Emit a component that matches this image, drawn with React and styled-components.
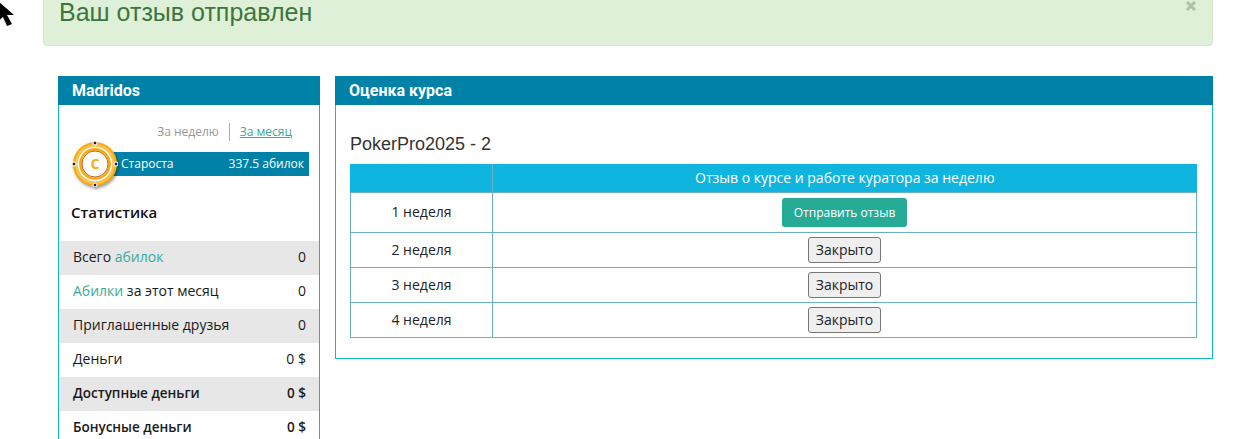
import React from "react";
import styled, { createGlobalStyle } from "styled-components";

const GlobalStyle = createGlobalStyle`
  html, body {
    margin: 0;
    padding: 0;
    height: 439px;
    overflow: hidden;
    background: #fff;
    font-family: "Open Sans", "Liberation Sans", sans-serif;
    color: #222;
  }
  * { box-sizing: border-box; }
`;

const Page = styled.div`
  position: relative;
  width: 1247px;
  height: 439px;
  overflow: hidden;
  padding: 0 34px 0 43px;
`;

const Cursor = styled.svg`
  position: absolute;
  left: 0;
  top: 0;
`;

const Alert = styled.div`
  position: relative;
  height: 46px;
  background: #dff0d8;
  border: 1px solid #d6e9c6;
  border-top: 0;
  border-radius: 0 0 4px 4px;
  padding-left: 15px;
  color: #3c763d;
  font-family: "Liberation Sans", Arial, sans-serif;
  font-size: 25px;
  line-height: 25.5px;
`;

const Close = styled.svg`
  position: absolute;
  right: 16px;
  top: 1px;
  opacity: 0.2;
`;

const Columns = styled.div`
  display: flex;
  align-items: flex-start;
  gap: 15px;
  margin: 30px 0 0 15px;
`;

const Panel = styled.section`
  border: 1px solid #10b5df;
  border-top: 0;
  background: #fff;
  width: ${(p) => p.$width}px;
`;

const PanelHead = styled.h3`
  margin: 0 -1px;
  height: 29px;
  background: #0082a8;
  color: #fff;
  padding-left: 14px;
  font-family: Roboto, "Open Sans", sans-serif;
  font-size: 16px;
  font-weight: 700;
  line-height: 30px;
`;

const Tabs = styled.div`
  display: flex;
  justify-content: flex-end;
  align-items: center;
  height: 18px;
  margin-top: 18px;
  padding-right: 27px;
  font-size: 12px;
`;

const TabPlain = styled.span`
  color: #999;
  padding-right: 10px;
  border-right: 1px solid #aaa;
  line-height: 18px;
`;

const TabLink = styled.a`
  color: #3aa99a;
  text-decoration: underline;
  padding-left: 10px;
  line-height: 18px;
`;

const RankRow = styled.div`
  position: relative;
  margin: 11px 10px 0 35px;
  height: 24px;
  background: #0082a8;
  color: #fff;
  font-size: 12px;
  line-height: 24px;
  display: flex;
  justify-content: space-between;
  padding: 0 5px 0 27px;
`;

const Chip = styled.svg`
  position: absolute;
  left: -22px;
  top: -11.5px;
  filter: drop-shadow(1px 2px 1.5px rgba(0, 0, 0, 0.4));
`;

const StatsTitle = styled.h4`
  margin: 26px 0 0 12px;
  height: 39px;
  font-size: 15px;
  font-weight: 600;
  line-height: 20px;
  color: #111;
`;

const StatRow = styled.div`
  display: flex;
  justify-content: space-between;
  height: 34px;
  padding: 0 13px 0 14px;
  font-size: ${(p) => (p.$bold ? 13.5 : 14)}px;
  line-height: 32px;
  font-weight: ${(p) => (p.$bold ? 600 : 400)};
  color: #1a1a1a;
  background: ${(p) => (p.$shaded ? "#e7e7e7" : "#fff")};
`;

const Accent = styled.span`
  color: #3aa99a;
`;

const MainBody = styled.div`
  padding: 28px 15px 20px 14px;
`;

const CourseTitle = styled.h3`
  margin: 0 0 9px;
  font-family: "Liberation Sans", Arial, sans-serif;
  font-size: 18px;
  font-weight: 400;
  line-height: 22px;
  color: #333;
`;

const Table = styled.table`
  width: 847px;
  border-collapse: collapse;
  table-layout: fixed;
  font-size: 14px;
`;

const HeadCell = styled.th`
  height: 28px;
  padding: 0;
  background: #10b5df;
  color: #fff;
  font-size: 14px;
  font-weight: 400;
  border: 1px solid #6aafc4;
  border-top: 0;
  border-right: 0;
  border-left-color: ${(p) => (p.$first ? "#10b5df" : "#6aafc4")};
  width: ${(p) => p.$width || "auto"};
`;

const Cell = styled.td`
  padding: 0 0 ${(p) => (p.$lift ? 2 : 0)}px;
  height: ${(p) => p.$height}px;
  text-align: center;
  border: 1px solid #6aafc4;
`;

const SendButton = styled.a`
  display: inline-block;
  height: 29px;
  line-height: 29px;
  padding: 0 12px;
  background: #26ab97;
  color: #fff;
  border-radius: 3px;
  font-size: 12px;
  vertical-align: middle;
`;

const ClosedButton = styled.button`
  height: 26px;
  width: 73px;
  padding: 0;
  background: #efefef;
  border: 1px solid #767676;
  border-radius: 3px;
  color: #222;
  font-family: "Open Sans", sans-serif;
  font-size: 14px;
  vertical-align: middle;
`;

const stats = [
  { id: "total", value: "0", label: <>Всего <Accent>абилок</Accent></> },
  { id: "month", value: "0", label: <><Accent>Абилки</Accent> за этот месяц</> },
  { id: "friends", value: "0", label: "Приглашенные друзья" },
  { id: "money", value: "0 $", label: "Деньги" },
  { id: "free", value: "0 $", label: "Доступные деньги", bold: true },
  { id: "bonus", value: "0 $", label: "Бонусные деньги", bold: true },
];

function PokerChip() {
  return (
    <Chip width="46" height="46" viewBox="0 0 46 46">
      <circle cx="23" cy="23" r="22" fill="#fba90f" />
      <circle cx="23" cy="23" r="18.5" fill="none" stroke="#fcc24f" strokeWidth="3" />
      <circle cx="23" cy="23" r="16.5" fill="none" stroke="#fff" strokeWidth="1.6" />
      <circle cx="23" cy="23" r="14.5" fill="#fff" stroke="#fba90f" strokeWidth="2.4" />
      <circle cx="23" cy="23" r="13" fill="#fff" stroke="#b8672a" strokeWidth="1" />
      <text x="23" y="28" textAnchor="middle" fontFamily="Open Sans, sans-serif" fontSize="14" fontWeight="700" fill="#fba90f">C</text>
      <circle cx="23" cy="2" r="2.5" fill="#fff" />
      <circle cx="23" cy="44" r="2.5" fill="#fff" />
      <circle cx="2" cy="23" r="2.5" fill="#fff" />
      <circle cx="44" cy="23" r="2.5" fill="#fff" />
      <rect x="21.75" y="0.75" width="2.5" height="2.5" fill="#222" />
      <rect x="21.75" y="42.75" width="2.5" height="2.5" fill="#222" />
      <rect x="0.75" y="21.75" width="2.5" height="2.5" fill="#222" />
      <rect x="42.75" y="21.75" width="2.5" height="2.5" fill="#222" />
    </Chip>
  );
}

export default function App() {
  return (
    <Page>
      <GlobalStyle />
      <Cursor width="14" height="26" viewBox="0 0 14 26">
        <path d="M-3 0 L14 15 L7 15 L12 24 L7 26 L3 17 L-3 22 Z" fill="#000" />
      </Cursor>
      <Alert>
        Ваш отзыв отправлен
        <Close width="10" height="10" viewBox="0 0 10 10">
          <path d="M1 1 L9 9 M9 1 L1 9" stroke="#000" strokeWidth="3" fill="none" />
        </Close>
      </Alert>
      <Columns>
        <Panel $width={262}>
          <PanelHead>Madridos</PanelHead>
          <Tabs>
            <TabPlain>За неделю</TabPlain>
            <TabLink>За месяц</TabLink>
          </Tabs>
          <RankRow>
            <PokerChip />
            <span>Староста</span>
            <span>337.5 абилок</span>
          </RankRow>
          <StatsTitle>Статистика</StatsTitle>
          {stats.map((s, i) => (
            <StatRow key={s.id} $shaded={i % 2 === 0} $bold={s.bold}>
              <span>{s.label}</span>
              <span>{s.value}</span>
            </StatRow>
          ))}
        </Panel>
        <Panel $width={878}>
          <PanelHead>Оценка курса</PanelHead>
          <MainBody>
            <CourseTitle>PokerPro2025 - 2</CourseTitle>
            <Table>
              <thead>
                <tr>
                  <HeadCell $first $width="142px" />
                  <HeadCell>Отзыв о курсе и работе куратора за неделю</HeadCell>
                </tr>
              </thead>
              <tbody>
                <tr>
                  <Cell $height={40} $lift>1 неделя</Cell>
                  <Cell><SendButton>Отправить отзыв</SendButton></Cell>
                </tr>
                {["2 неделя", "3 неделя", "4 неделя"].map((week) => (
                  <tr key={week}>
                    <Cell $height={35}>{week}</Cell>
                    <Cell><ClosedButton>Закрыто</ClosedButton></Cell>
                  </tr>
                ))}
              </tbody>
            </Table>
          </MainBody>
        </Panel>
      </Columns>
    </Page>
  );
}
